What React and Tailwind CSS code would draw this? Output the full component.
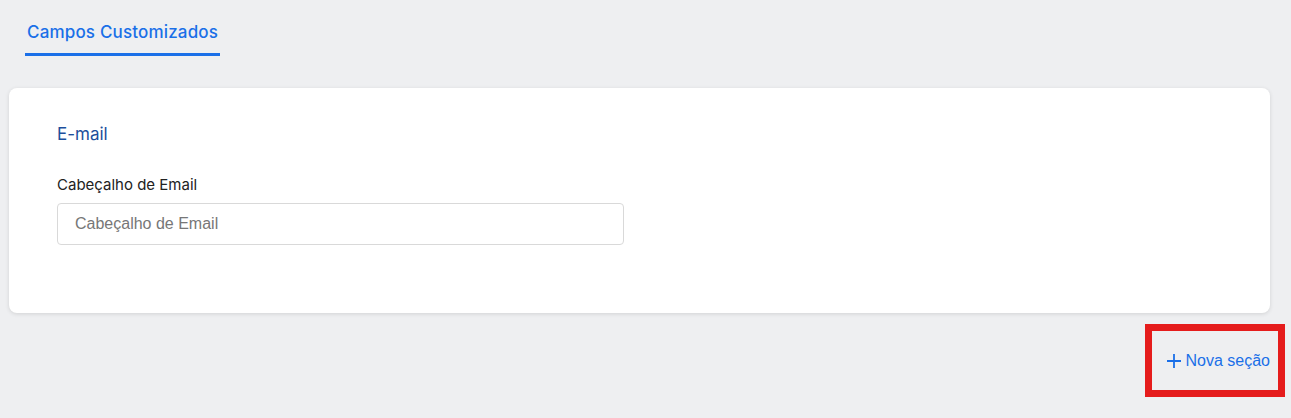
import React from "react";

const App = () => {
  return (
    <div className="min-h-[418px] w-full bg-[#eeeff1] font-['Inter',sans-serif]">
      <div className="pl-[25px] pt-[20px]">
        <div className="inline-flex flex-col">
          <span className="px-[2px] text-[17px] font-medium leading-[24px] tracking-[0.01em] text-[#1a6fe8]">
            Campos Customizados
          </span>
          <div className="mt-[9px] h-[3px] bg-[#1a6fe8]" />
        </div>
      </div>

      <div className="ml-[9px] mr-[21px] mt-[32px] h-[225px] rounded-[8px] bg-white px-[48px] pt-[33px] shadow-[0_1px_4px_rgba(0,0,0,0.12)]">
        <h3 className="text-[17px] leading-[26px] text-[#1d4f9c]">E-mail</h3>
        <label className="mt-[27px] block text-[15px] leading-[22px] text-[#222]">
          Cabeçalho de Email
        </label>
        <input
          type="text"
          placeholder="Cabeçalho de Email"
          className="mt-[7px] h-[42px] w-[567px] rounded-[4px] border border-[#d9d9d9] px-[17px] font-['Liberation_Sans',sans-serif] text-[16px] text-[#333] placeholder:text-[#777] outline-none"
        />
      </div>

      <div className="mr-[6px] mt-[11px] flex justify-end">
        <div className="flex h-[73px] w-[140px] items-center justify-end border-[7px] border-[#e51c1c] pr-[8px]">
          <button className="flex items-center gap-[4px] font-['Liberation_Sans',sans-serif] text-[16px] text-[#1a6fe8]">
            <svg width="16" height="16" viewBox="0 0 16 16" fill="none" stroke="currentColor" strokeWidth="1.8">
              <path d="M8 1v14M1 8h14" />
            </svg>
            Nova seção
          </button>
        </div>
      </div>
    </div>
  );
};

export default App;
